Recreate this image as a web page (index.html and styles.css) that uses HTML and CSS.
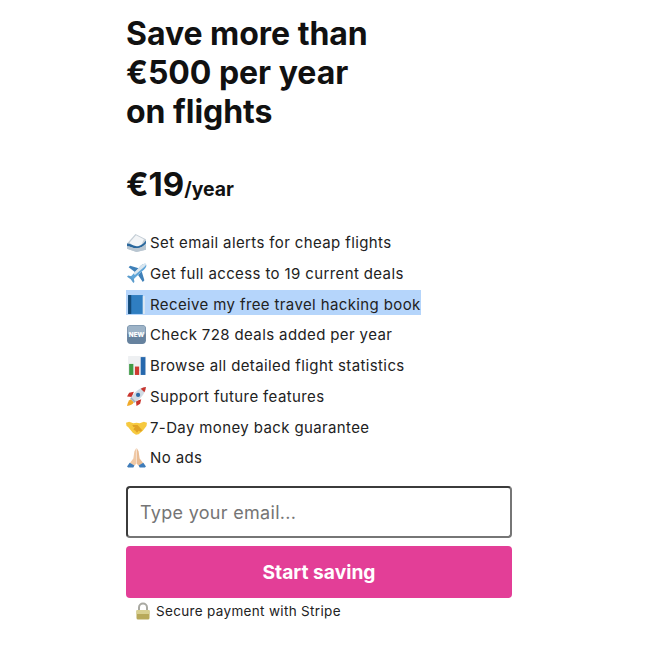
FILE: index.html
```html
<!DOCTYPE html>
<html lang="en">
<head>
<meta charset="utf-8">
<title>Save more than €500 per year on flights</title>
<link rel="stylesheet" href="styles.css">
</head>
<body>
<main class="card">
  <h1 class="title">Save more than<br>€500 per year<br>on flights</h1>
  <p class="price"><span class="amount">€19</span><span class="period">/year</span></p>
  <ul class="features">
    <li class="feature">
      <svg class="emoji" viewBox="0 0 20 20"><path d="M1 11 9 2l10 5v10l-9 2-9-3z" fill="#c4ced6"/><path d="M3.500 10 9.500 3l7.500 4-3 7-7 0z" fill="#f3f5f7"/><path d="M1 11c3 0 5 2 9 2.500 3 .3 7-2.500 9-5.500v3c-2 3-5 4.500-9 4.500-4 0-6-2-9-2z" fill="#27669c"/><path d="M1 13.500c3 0 5 2 9 2 4 0 7-2 9-4.500v6l-9 2-9-3z" fill="#b9c6d1"/></svg>
      <span>Set email alerts for cheap flights</span></li>
    <li class="feature">
      <svg class="emoji" viewBox="0 0 20 20"><path d="M12 5 4 2.500 2.500 4l6 4.500zM15 8l2.500 8.500L16 18l-4.500-6.500z" fill="#3f80b8"/><path d="M9 9.500 5 12.500 2 12 1 13l3.500 2.500L7 19l1-1-.500-3 3.500-4z" fill="#5b9ccd"/><path d="M19 1c-1.200-1-3.500 0-5 1.500L4.500 13 7 15.500 17.500 6C19 4.500 20 2.200 19 1z" fill="#5fa5d8"/><path d="M19 1c-1.200-1-3.500 0-5 1.500L7 10l1.500 1.500 8-7C18 3.200 19.500 2 19 1z" fill="#dbe6ee"/></svg>
      <span>Get full access to 19 current deals</span></li>
    <li class="feature selected">
      <svg class="emoji" viewBox="0 0 20 20"><path d="M2 1h14v18H2z" fill="#2f7ec1"/><path d="M2 1h3v18H2z" fill="#134a78"/><path d="M16 2h2v17h-2z" fill="#dbe7f2"/></svg>
      <span>Receive my free travel hacking book</span></li>
    <li class="feature">
      <svg class="emoji" viewBox="0 0 20 20"><rect x="1" y="1" width="18" height="18" rx="3.500" fill="#66829e"/><rect x="1.500" y="1.500" width="17" height="9" rx="3" fill="#9db3c7"/><text class="new-tag" x="10" y="12.500" text-anchor="middle">NEW</text></svg>
      <span>Check 728 deals added per year</span></li>
    <li class="feature">
      <svg class="emoji" viewBox="0 0 20 20"><rect x="2" y="1" width="17" height="18" fill="#eef0f2"/><rect x="3" y="8.500" width="4" height="10.500" fill="#3f9b45"/><rect x="8.500" y="11" width="4" height="8" fill="#cf3a32"/><rect x="14" y="2" width="4.500" height="17" fill="#2668ad"/></svg>
      <span>Browse all detailed flight statistics</span></li>
    <li class="feature">
      <svg class="emoji" viewBox="0 0 20 20"><path d="M4.500 12.500C2.500 13.500 1.500 16 1 19c3-.5 5.500-1.500 6.500-3.500z" fill="#f0a928"/><path d="M7.500 5.500 3 6.500 1 10l4.500.5zM14.500 12.500l-1 4.500L10 19l-.500-4.500z" fill="#c9352e"/><path d="M19 1c-5.500.5-10 4-14 9.500l4.500 4.500C15 11 18.500 6.500 19 1z" fill="#d2dbe3"/><path d="M19 1c-1.800.2-3.500.7-5 1.500L17.500 6c.8-1.500 1.300-3.200 1.500-5z" fill="#c9352e"/><circle cx="11.500" cy="8.500" r="2" fill="#2d6ea8"/><path d="M5 10.500 9.500 15 8 16 4 12z" fill="#9fb0bf"/></svg>
      <span>Support future features</span></li>
    <li class="feature">
      <svg class="emoji" viewBox="0 0 20 20"><path d="M0 5.500 3 4.500 7 6l3-.5 3 .5 4-1.500 3 1-.500 3-3.500 4.500-4 3.500-2.500.5-3-2L2 9.500.500 8.500z" fill="#f6c93f"/><path d="M6 7.500h5l4.500 5-1.500 1.500-2-1-1.500 2-1.500-2-2-1 1.500-2.500H7z" fill="#e0a225"/></svg>
      <span>7-Day money back guarantee</span></li>
    <li class="feature">
      <svg class="emoji" viewBox="0 0 20 20"><path d="M9.800 1 8 4 7 11 3.500 15.500l4 2.500 2.300-2z" fill="#f0c9a6"/><path d="M10.200 1 12 4l1 7 3.500 4.500-4 2.500-2.300-2z" fill="#e9bc94"/><path d="M1 18.500l2.500-3.500 4.500 2.500-1 2H2zM19 18.500 16.500 15 12 17.500l1 2h5z" fill="#3f7cb9"/></svg>
      <span>No ads</span></li>
  </ul>
  <form class="signup">
    <input class="email" type="text" placeholder="Type your email...">
    <button class="submit" type="button">Start saving</button>
  </form>
  <p class="secure">
    <svg class="lock" viewBox="0 0 16 18"><path d="M4 9V5.500a4 4 0 0 1 8 0V9" fill="none" stroke="#a9a9a2" stroke-width="2"/><rect x="1.500" y="8" width="13" height="9.500" rx="1.500" fill="#b8a95a"/><rect x="1.500" y="8" width="13" height="4" fill="#d8cf90"/></svg>
    <span>Secure payment with Stripe</span></p>
</main>
</body>
</html>
```

FILE: styles.css
```css
* { box-sizing: border-box; }

html, body { margin: 0; background: #fff; }

body {
  font-family: Inter, "Liberation Sans", sans-serif;
  color: #111;
}

.card {
  width: 386px;
  margin-left: 126px;
  padding-top: 14px;
}

.title {
  margin: 0;
  font-size: 32px;
  line-height: 39px;
  font-weight: 700;
  letter-spacing: -.03px;
}

.price {
  margin: 32px 0 0;
  line-height: 42px;
  font-weight: 700;
}

.amount { font-size: 33px; }
.period { font-size: 19.400px; }

.features {
  list-style: none;
  margin: 16px 0 0;
  padding: 0;
}

.feature {
  display: flex;
  align-items: center;
  height: 30.800px;
  font-size: 15px;
  letter-spacing: .38px;
  white-space: nowrap;
  color: #222;
}

.emoji {
  width: 21px;
  height: 21px;
  margin-right: 3px;
  flex: none;
}

.selected {
  width: fit-content;
  height: 25px;
  margin: 1px 0 4.800px;
  padding-top: 4px;
  background: #b5d5fb;
}

.new-tag {
  font-size: 6px;
  font-weight: 800;
  letter-spacing: 0;
  fill: #fff;
}

.signup {
  display: flex;
  flex-direction: column;
  gap: 8px;
  margin-top: 13px;
}

.email {
  width: 100%;
  height: 52px;
  padding: 0 12px;
  font: 18px Inter, sans-serif;
  letter-spacing: .3px;
  background: #fff;
  border: 2px solid #767676;
  border-color: #3b3b3b #767676 #767676 #3b3b3b;
  border-radius: 4px;
}

.email::placeholder { color: #757575; }

.submit {
  height: 52px;
  border: 0;
  border-radius: 4px;
  background: #e33e97;
  color: #fff;
  font: 700 19.200px Inter, sans-serif;
}

.secure {
  display: flex;
  align-items: center;
  margin: 4px 0 0 9px;
  font-size: 13.500px;
  letter-spacing: .33px;
  line-height: 18px;
  color: #222;
}

.lock {
  width: 16px;
  height: 18px;
  margin-right: 5px;
}
```
